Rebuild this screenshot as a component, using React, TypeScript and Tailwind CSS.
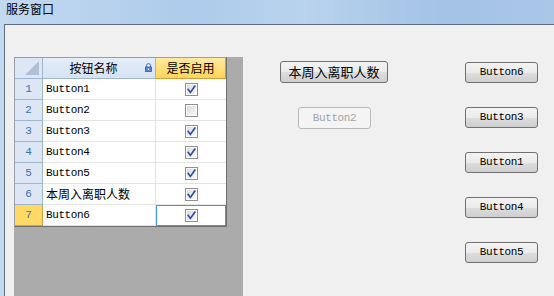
import React from 'react';

interface GridRow {
  n: number;
  name: string;
  checked: boolean;
  cjk?: boolean;
  current?: boolean;
}

const rows: GridRow[] = [
  { n: 1, name: 'Button1', checked: true },
  { n: 2, name: 'Button2', checked: false },
  { n: 3, name: 'Button3', checked: true },
  { n: 4, name: 'Button4', checked: true },
  { n: 5, name: 'Button5', checked: true },
  { n: 6, name: '本周入离职人数', checked: true, cjk: true },
  { n: 7, name: 'Button6', checked: true, current: true },
];

const rightButtons = ['Button6', 'Button3', 'Button1', 'Button4', 'Button5'];

function CheckBox({ checked }: { checked: boolean }) {
  return (
    <svg width="13" height="13" viewBox="0 0 13 13">
      <defs>
        <linearGradient id="cbg" x1="0" y1="0" x2="1" y2="1">
          <stop offset="0" stopColor="#dcdcdc" />
          <stop offset="1" stopColor="#f8f8f8" />
        </linearGradient>
      </defs>
      <rect x="0.5" y="0.5" width="12" height="12" fill="#fff" stroke="#8e8f8f" />
      <rect x="2" y="2" width="9" height="9" fill="url(#cbg)" />
      {checked && (
        <path d="M3.2 6.4 L5.4 9.4 L9.8 3.2" fill="none" stroke="#2b4fa5" strokeWidth="1.7" strokeLinecap="square" />
      )}
    </svg>
  );
}

function LockIcon() {
  return (
    <svg width="7" height="9" viewBox="0 0 7 9">
      <path d="M1.5 4 V2.6 a2 2 0 0 1 4 0 V4" fill="none" stroke="#4a6fc0" strokeWidth="1" />
      <rect x="0.5" y="4" width="6" height="4.5" fill="#5b86d6" stroke="#3559a8" strokeWidth="0.8" />
      <rect x="3" y="5.5" width="1" height="1.5" fill="#e8f0ff" />
    </svg>
  );
}

function WinButton({ label, cjk, disabled, className }: { label: string; cjk?: boolean; disabled?: boolean; className: string }) {
  return (
    <div
      className={`flex items-center justify-center rounded-[3px] border ${
        disabled
          ? 'border-[#b6babd] bg-[#f4f4f4] text-[#a3a3a3]'
          : 'border-[#707070] bg-[linear-gradient(#f3f3f3_0%,#ebebeb_50%,#dddddd_51%,#cfcfcf_100%)] text-black'
      } ${
        cjk
          ? "text-[13px] font-['Noto_Sans_CJK_SC',sans-serif]"
          : "text-[11px] tracking-[-0.4px] font-['Liberation_Mono','Noto_Sans_CJK_SC',monospace]"
      } ${className}`}
    >
      {label}
    </div>
  );
}

export default function App() {
  return (
    <div className="flex h-[296px] w-[554px] flex-col overflow-hidden bg-[linear-gradient(90deg,#c2d9f1_0%,#aecbeb_35%,#b9d3ee_55%,#a3c2e5_80%,#aac7e8_100%)]">
      {/* Title bar */}
      <div className="h-[24px] shrink-0 pl-[6px] pt-[3px] text-[12px] leading-[12px] text-black font-['Noto_Sans_CJK_SC',sans-serif]">
        服务窗口
      </div>

      {/* Client area */}
      <div className="ml-[4px] flex flex-1 border-l border-t border-[#5d6e80] bg-[#f0f0f0] pl-[9px] pt-[32px]">
        {/* Grid panel */}
        <div className="h-full w-[229px] shrink-0 bg-[#ababab]">
          <div className="w-[213px] border-l border-t border-[#9a9fa5] border-r-[#6f6f6f] border-b-[#6f6f6f] border-r border-b bg-white">
            {/* Header */}
            <div className="flex h-[21px] text-[12px] font-['Noto_Sans_CJK_SC',sans-serif]">
              <div className="relative w-[28px] shrink-0 border-b border-r border-[#9eb6ce] bg-[#dce6f4]">
                <svg className="absolute bottom-[3px] right-[3px]" width="14" height="14" viewBox="0 0 14 14">
                  <path d="M14 0 L14 14 L0 14 Z" fill="#b0bfd4" />
                </svg>
              </div>
              <div className="relative flex w-[113px] shrink-0 items-center justify-center border-b border-r border-[#9eb6ce] bg-[linear-gradient(#e4edf8,#d6e3f2)] pr-[11px] leading-none">
                按钮名称
                <span className="absolute right-[3px] top-[5px] flex">
                  <LockIcon />
                </span>
              </div>
              <div className="flex w-[70px] shrink-0 items-center justify-center border-b border-r border-[#d59d3a] bg-[linear-gradient(#ffeaa0,#ffd45a)] leading-none">
                是否启用
              </div>
            </div>

            {/* Rows */}
            {rows.map((r) => (
              <div key={r.n} className="flex h-[21px]">
                <div
                  className={`flex w-[28px] shrink-0 items-center justify-center border-b border-r text-[11px] font-['Liberation_Mono',monospace] ${
                    r.current
                      ? 'border-[#d59d3a] bg-[#ffd966] text-[#3d6fb0]'
                      : 'border-[#9eb6ce] bg-[#dce6f4] text-[#3d6fb0]'
                  }`}
                >
                  {r.n}
                </div>
                <div
                  className={`flex w-[113px] shrink-0 items-center border-b border-r border-[#e3e3e3] pl-[3px] text-black ${
                    r.cjk
                      ? "text-[12px] font-['Noto_Sans_CJK_SC',sans-serif]"
                      : "text-[11px] tracking-[-0.4px] font-['Liberation_Mono','Noto_Sans_CJK_SC',monospace]"
                  }`}
                >
                  {r.name}
                </div>
                <div
                  className={`flex w-[70px] shrink-0 items-center justify-center border-b ${
                    r.current ? 'border border-[#3399ff]' : 'border-[#e3e3e3]'
                  }`}
                >
                  <CheckBox checked={r.checked} />
                </div>
              </div>
            ))}
          </div>
        </div>

        {/* Middle buttons */}
        <div className="ml-[37px] flex w-[108px] shrink-0 flex-col pt-[4px]">
          <WinButton label="本周入离职人数" cjk className="h-[22px] w-[108px]" />
          <WinButton label="Button2" disabled className="ml-[18px] mt-[24px] h-[22px] w-[73px]" />
        </div>

        {/* Right buttons */}
        <div className="ml-[77px] flex flex-col gap-[24px] pt-[5px]">
          {rightButtons.map((b) => (
            <WinButton key={b} label={b} className="h-[21px] w-[73px]" />
          ))}
        </div>
      </div>
    </div>
  );
}
